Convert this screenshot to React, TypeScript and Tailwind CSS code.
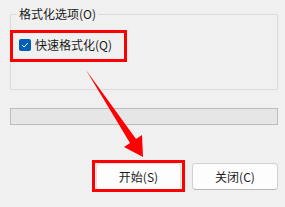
import React from "react";

export default function App() {
  const font = { fontFamily: '"Noto Sans CJK SC", "Microsoft YaHei", sans-serif' };
  return (
    <div
      className="relative w-[285px] h-[207px] bg-[#f0f0f0] text-[12px] text-[#1a1a1a] overflow-hidden"
      style={font}
    >
      <div className="flex flex-col pl-[10px] pr-[7px] pt-[14px]">
        {/* group box */}
        <div className="relative h-[76px] border border-[#dadada] rounded-[1px]">
          <span className="absolute left-[6px] top-[-10px] px-[2px] bg-[#f0f0f0] leading-[18px]">
            格式化选项(O)
          </span>
          <div className="flex items-center gap-[4px] pl-[8px] pt-[23px]">
            <span className="w-[12px] h-[12px] rounded-[2px] bg-[#005fb8] flex items-center justify-center">
              <svg width="8" height="8" viewBox="0 0 8 8">
                <path d="M1.2 4.2 L3.1 6 L6.8 2" stroke="#fff" strokeWidth="1" fill="none" />
              </svg>
            </span>
            <span className="leading-[14px]">快速格式化(Q)</span>
          </div>
        </div>
        {/* progress bar */}
        <div className="mt-[18px] h-[17px] border border-[#bcbcbc] bg-[#e6e6e6]" />
        {/* buttons */}
        <div className="flex justify-end gap-[11px] mt-[38px]">
          <button className="w-[85px] h-[27px] rounded-[4px] bg-[#fdfdfd] border border-[#e0e0e0] leading-none">
            开始(S)
          </button>
          <button className="w-[86px] h-[27px] rounded-[4px] bg-[#fdfdfd] border border-[#d0d0d0] border-b-[#b8b8b8] leading-none">
            关闭(C)
          </button>
        </div>
      </div>

      {/* annotations */}
      <div className="absolute left-[10px] top-[30px] w-[117px] h-[32px] border-[3px] border-[#ff0000]" />
      <div className="absolute left-[92px] top-[160px] w-[93px] h-[32px] border-[3px] border-[#ff0000]" />
      <svg className="absolute left-0 top-0" width="285" height="207" viewBox="0 0 285 207">
        <polygon
          points="86,70 136,139 142,135 143,157 124,147 130,143"
          fill="#ff0000"
        />
      </svg>
    </div>
  );
}
